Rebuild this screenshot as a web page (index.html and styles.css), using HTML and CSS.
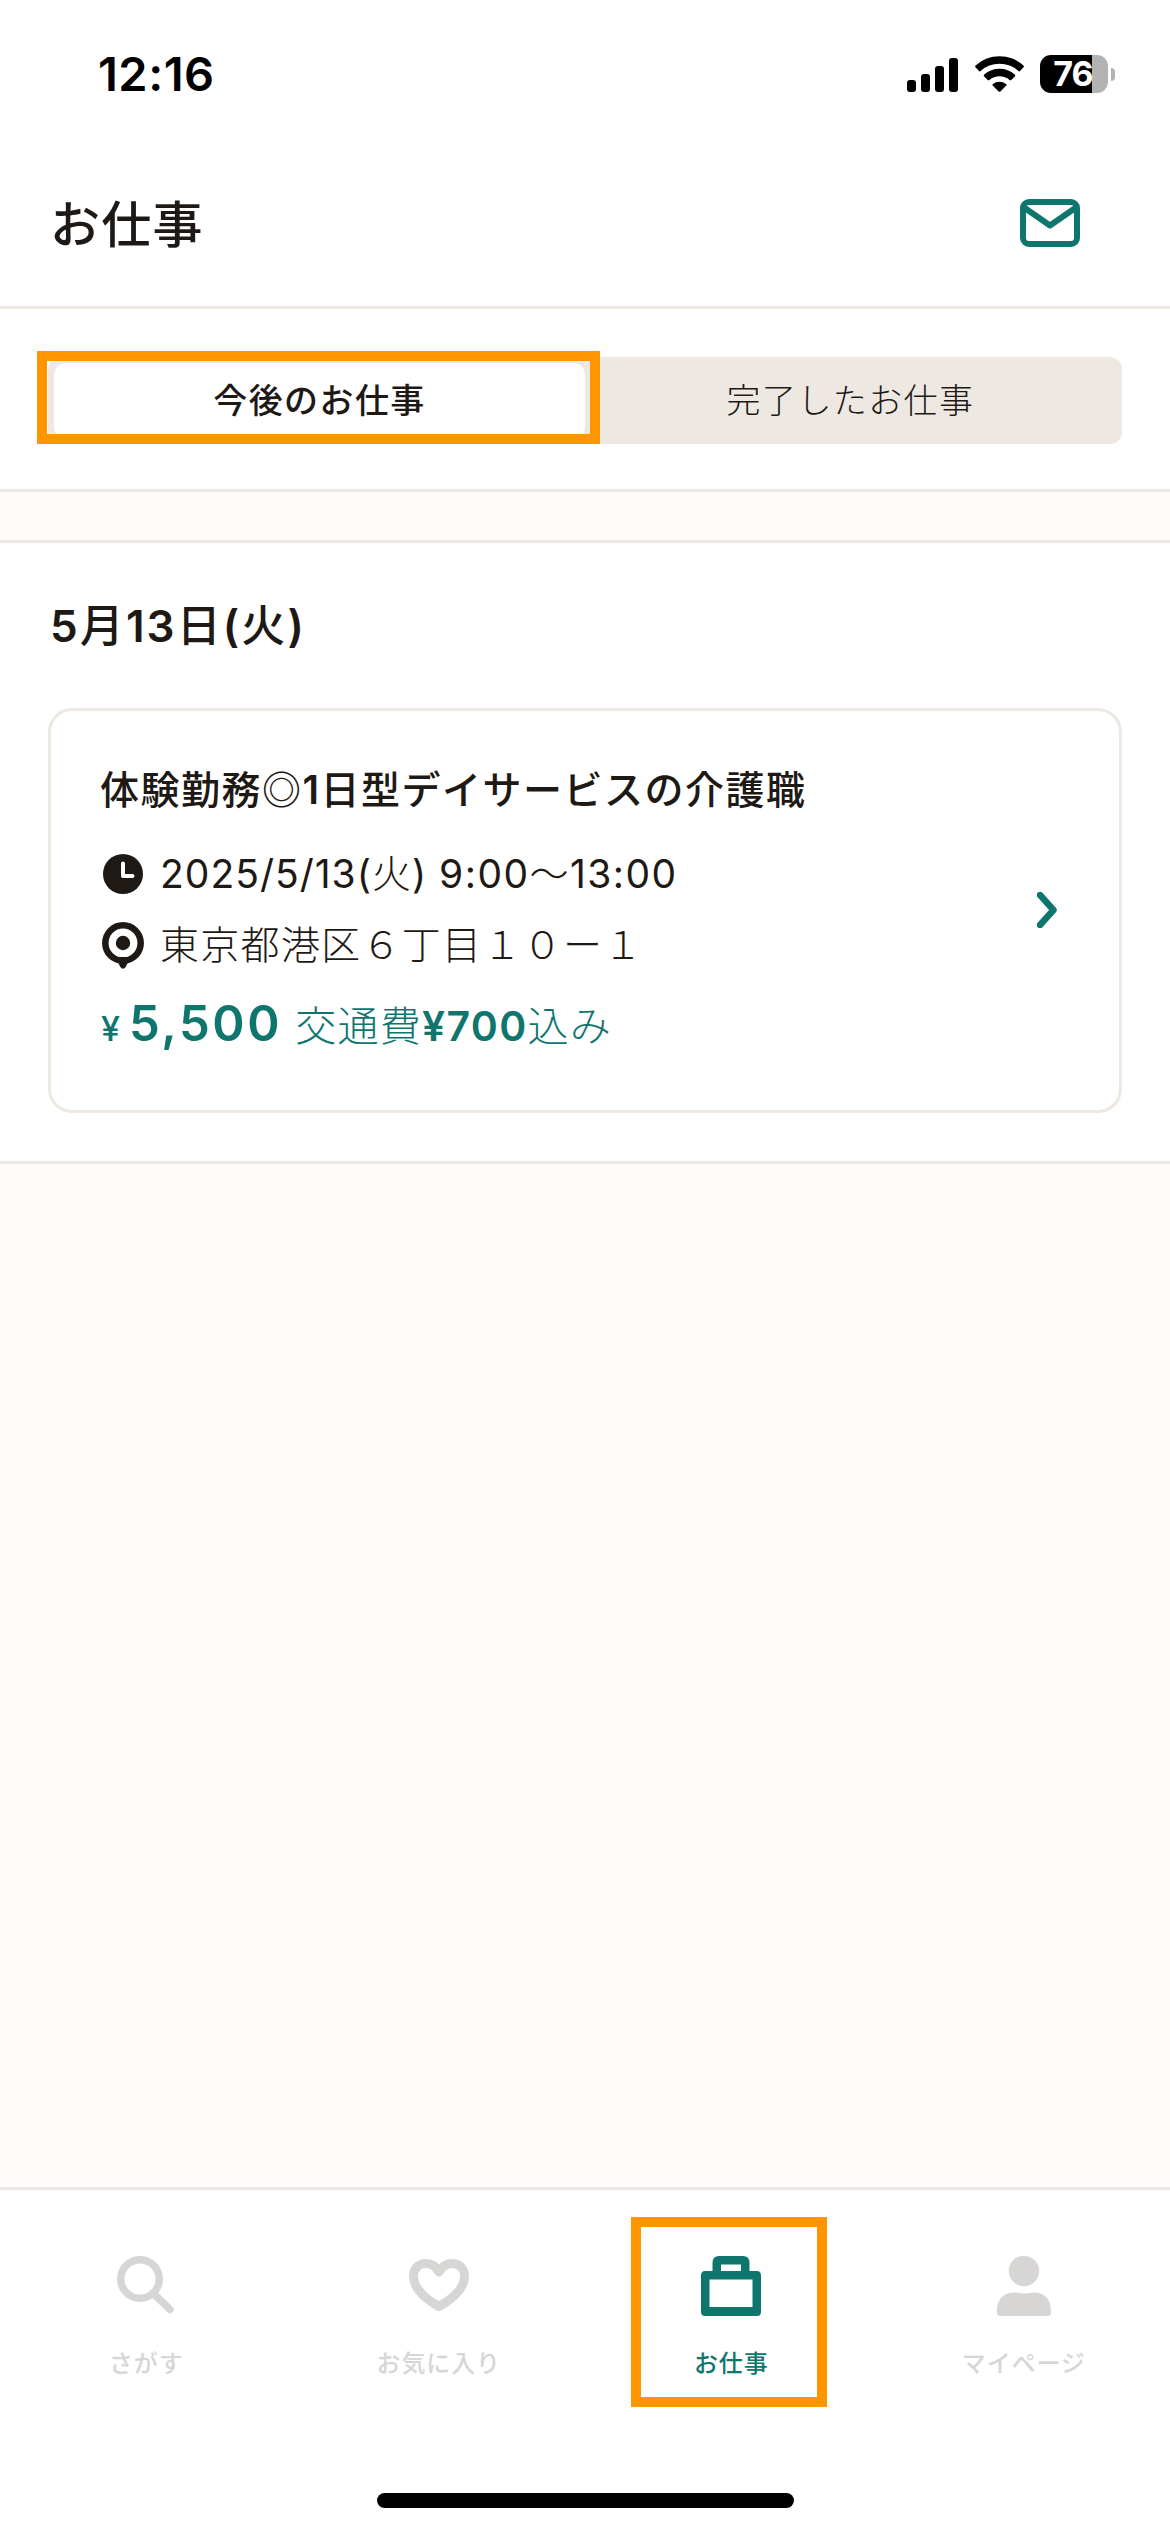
FILE: index.html
```html
<!DOCTYPE html>
<html lang="ja">
<head>
<meta charset="utf-8">
<title>お仕事</title>
<link rel="stylesheet" href="styles.css">
</head>
<body>
<div class="status-bar">
  <span class="clock">12:16</span>
  <div class="indicators">
    <svg class="signal" width="51" height="34" viewBox="0 0 51 34"><rect y="22" width="9" height="12" rx="3"/><rect x="14" y="16" width="9" height="18" rx="3"/><rect x="28" y="8" width="9" height="26" rx="3"/><rect x="42" width="9" height="34" rx="3"/></svg>
    <svg class="wifi" width="49" height="36" viewBox="0 0 49 36"><path d="M0.5 11.2Q-.3 10.4.6 9.6A35 35 0 0 1 48.4 9.6Q49.3 10.4 48.5 11.2L45 15.1Q44.200 15.700 43.400 15A28 28 0 0 0 5.600 15Q4.800 15.700 4 15.100ZM9 20.300Q8.200 19.500 9.200 18.600A23 23 0 0 1 39.800 18.600Q40.800 19.500 40 20.300L36.300 24.100Q35.500 24.800 34.600 24A15.500 15.500 0 0 0 14.400 24Q13.500 24.800 12.700 24.100ZM17.700 29.600Q17 28.700 18 28A10.500 10.500 0 0 1 31 28Q32 28.700 31.300 29.600L25.400 35.500Q24.500 36.200 23.600 35.500Z"/></svg>
    <div class="battery"><span class="battery-body">76</span><span class="battery-cap"></span></div>
  </div>
</div>
<header class="header">
  <h1 class="page-title">お仕事</h1>
  <svg class="mail" width="60" height="48" viewBox="0 0 60 48"><rect x="3" y="3" width="54" height="42" rx="6"/><path d="M4 8.500L30 26.500L56 8.500"/></svg>
</header>
<div class="tabs">
  <div class="segment">
    <div class="tab tab-active">今後のお仕事</div>
    <div class="tab">完了したお仕事</div>
    <div class="marker marker-tab"></div>
  </div>
</div>
<main class="content">
  <section class="day">
    <h2 class="date"><b>5</b>月<b>13</b>日<b>(</b>火<b>)</b></h2>
    <article class="card">
      <div class="job">
        <h3 class="job-title">体験勤務◎<b>1</b>日型デイサービスの介護職</h3>
        <div class="row row-time">
          <svg class="row-icon" width="42" height="40" viewBox="0 0 42 40"><circle cx="21" cy="20" r="20"/><path class="hand" d="M21 9.500V22H30.500"/></svg>
          <span><span class="time-day">2025/5/13(<span class="weekday">火</span>) </span><span class="time-hours">9:00<span class="weekday">〜</span>13:00</span></span>
        </div>
        <div class="row row-place">
          <svg class="row-icon pin" width="42" height="47" viewBox="0 0 42 47"><circle class="ring" cx="21" cy="21" r="17.700"/><circle cx="21" cy="21" r="7.200"/><path d="M13 37Q16 39 18 44.500Q21 49 24 44.500Q26 39 29 37L27 35H15Z"/></svg>
          <span class="place-text">東京都港区６丁目１０ー１</span>
        </div>
        <div class="pay"><span class="yen">¥</span><span class="amount">5,500</span><span class="fare">交通費<b class="fare-sum">¥700</b>込み</span></div>
      </div>
      <svg class="chevron" width="20" height="36" viewBox="0 0 20 36"><path d="M3 3L16.500 18L3 33"/></svg>
    </article>
  </section>
</main>
<nav class="nav">
  <a class="nav-item"><svg class="nav-icon" width="60" height="60" viewBox="0 0 60 60"><circle class="line7" cx="24" cy="23" r="19.300"/><path class="line7" d="M38 38L54 53.500"/></svg><span class="nav-label">さがす</span></a>
  <a class="nav-item"><svg class="nav-icon" width="60" height="60" viewBox="0 0 60 60"><path class="line9" d="M30 50.500Q4.500 36 4.500 20.500C4.500 12 10 7.500 17 7.500C23 7.500 27 10.500 30 16C33 10.500 37 7.500 43 7.500C50 7.500 55.500 12 55.500 20.500Q55.500 36 30 50.500Z"/></svg><span class="nav-label">お気に入り</span></a>
  <a class="nav-item nav-active"><svg class="nav-icon" width="60" height="60" viewBox="0 0 60 60"><path fill-rule="evenodd" d="M18 0H42Q48.500 0 48.500 7V15H56Q60 15 60 19.500V55.500Q60 60 56 60H4Q0 60 0 55.500V19.500Q0 15 4 15H11.500V7Q11.500 0 18 0ZM20 8.500V15H40V8.500ZM8.500 23.500V51H51.500V23.500Z"/></svg><span class="nav-label">お仕事</span><span class="marker marker-nav"></span></a>
  <a class="nav-item"><svg class="nav-icon" width="60" height="60" viewBox="0 0 60 60"><circle cx="30" cy="15" r="15.200"/><path d="M3 56V54C3 43 10 36.500 19.500 36.500C24 36.500 26 37.500 30 37.500S36 36.500 40.500 36.500C50 36.500 57 43 57 54V56Q57 60 53 60H7Q3 60 3 56Z"/></svg><span class="nav-label">マイページ</span></a>
</nav>
<footer class="home"><div class="home-bar"></div></footer>
</body>
</html>
```
FILE: styles.css
```css
* { box-sizing: border-box; }
body {
  margin: 0;
  width: 1170px;
  height: 2532px;
  display: flex;
  flex-direction: column;
  background: #fff;
  color: #1e1915;
  font-family: Inter, "Noto Sans CJK JP", sans-serif;
}
h1, h2, h3 { margin: 0; }
b { font-weight: 600; }
svg { display: block; flex: none; }

.status-bar {
  height: 141px;
  padding: 44px 55px 0 98px;
  display: flex;
  justify-content: space-between;
  align-items: flex-start;
  color: #000;
}
.clock { font-size: 47px; line-height: 60px; font-weight: 600; letter-spacing: 0.500px; }
.indicators { height: 60px; display: flex; align-items: center; }
.wifi { margin-left: 17px; }
.signal { margin-top: 1px; }
.wifi { margin-top: -1px; }
.battery { margin-left: 16px; display: flex; align-items: center; gap: 3px; }
.battery-body {
  width: 68px;
  height: 38px;
  border-radius: 11px;
  background: linear-gradient(90deg, #000 52px, #b3b3b3 52px);
  color: #fff;
  font-size: 34px;
  font-weight: 700;
  line-height: 38px;
  text-align: center;
  letter-spacing: -1px;
  padding-right: 2px;
}
.battery-cap { width: 4px; height: 13px; border-radius: 0 7px 7px 0; background: #b3b3b3; }

.header {
  height: 168px;
  padding: 0 90px 0 50px;
  display: flex;
  align-items: center;
  justify-content: space-between;
  border-bottom: 3px solid #ede8e2;
}
.page-title { font-size: 50px; line-height: 70px; font-weight: 500; letter-spacing: 1.300px; padding-top: 2px; }
.mail, .chevron, .ring, .hand, .line7, .line9 { fill: none; stroke-linecap: round; stroke-linejoin: round; }
.mail { margin-bottom: 1px; stroke: #0f766e; stroke-width: 6; }

.tabs { height: 183px; padding: 48px 48px 0; border-bottom: 3px solid #ede8e2; }
.segment {
  position: relative;
  height: 87px;
  padding: 6px;
  display: grid;
  grid-template-columns: 1fr 1fr;
  border-radius: 12px;
  background: #ede8e2;
}
.tab {
  border-radius: 12px;
  text-align: center;
  font-size: 34px;
  line-height: 76px;
  font-weight: 300;
  letter-spacing: 1.400px;
}
.tab-active { background: #fff; font-weight: 500; }
.marker { position: absolute; border: 10.500px solid #ff9500; }
.marker-tab { left: -11px; top: -6px; width: 563px; height: 93px; }

.content { height: 1695px; padding-top: 48px; background: #fdfcf8; }
.day {
  height: 624px;
  padding: 53px 48px 0;
  border-top: 3px solid #ede8e2;
  border-bottom: 3px solid #ede8e2;
  background: #fff;
}
.date { padding-left: 2px; font-size: 44px; line-height: 60px; font-weight: 500; letter-spacing: 2.100px; }
.card {
  height: 405px;
  margin-top: 52px;
  padding: 51px 62px 0 49px;
  display: flex;
  justify-content: space-between;
  border: 3px solid #ede8e2;
  border-radius: 24px;
}
.job-title { font-size: 39px; line-height: 56px; font-weight: 500; letter-spacing: 1.500px; }
.row { display: flex; align-items: center; gap: 16px; padding-left: 2px; font-size: 39px; line-height: 56px; }
.row-icon { fill: #1e1915; }
.hand { stroke: #fff; stroke-width: 4; }
.ring { stroke: #1e1915; stroke-width: 6.500; }
.row-time { margin-top: 28px; }
.row-place { margin-top: 15px; }
.time-day { letter-spacing: 1px; }
.time-hours { letter-spacing: 1.450px; }
.weekday { font-weight: 300; }
.place-text { font-weight: 300; letter-spacing: 1.300px; }
.pay { margin-top: 21px; display: flex; align-items: baseline; line-height: 60px; color: #0f766e; }
.yen { margin-left: 1px; font-size: 34px; font-weight: 500; }
.amount { margin-left: 9px; font-size: 49px; font-weight: 600; letter-spacing: 2.600px; }
.fare { margin-left: 13px; font-size: 41px; font-weight: 300; letter-spacing: 1.300px; }
.fare-sum { font-weight: 600; }
.chevron { margin-top: 130px; stroke: #0f766e; stroke-width: 6.500; }

.nav {
  height: 264px;
  display: grid;
  grid-template-columns: repeat(4, 1fr);
  border-top: 3px solid #ebe5dd;
}
.nav-item {
  position: relative;
  padding-top: 66px;
  display: flex;
  flex-direction: column;
  align-items: center;
  color: #d7d6d4;
}
.nav-icon { fill: currentColor; stroke: none; }
.nav-icon .line7 { fill: none; stroke: currentColor; stroke-width: 7.500; }
.nav-icon .line9 { fill: none; stroke: currentColor; stroke-width: 9; }
.nav-label { margin-top: 30px; font-size: 24px; line-height: 36px; font-weight: 500; letter-spacing: 0.900px; }
.nav-active { color: #0f766e; }
.marker-nav { left: 46px; top: 27px; width: 196px; height: 190px; }
.home { padding-top: 42px; display: flex; justify-content: center; }
.home-bar { width: 417px; height: 15px; border-radius: 8px; background: #000; }
```
